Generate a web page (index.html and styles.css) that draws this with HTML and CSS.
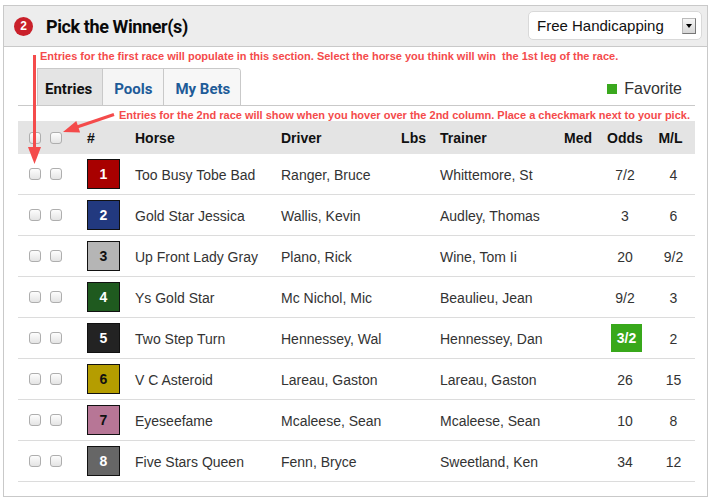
FILE: index.html
```html
<!DOCTYPE html>
<html lang="en">
<head>
<meta charset="utf-8">
<title>Pick the Winner(s)</title>
<link rel="stylesheet" href="styles.css">
</head>
<body>
<div class="panel">
  <div class="panel-head">
    <span class="step">2</span>
    <h2 class="title">Pick the Winner(s)</h2>
    <div class="select">
      <span class="select-label">Free Handicapping</span>
      <span class="select-btn"><svg width="6" height="4" viewBox="0 0 6 4"><polygon points="0,0 6,0 3,4" fill="#000"/></svg></span>
    </div>
  </div>
  <div class="panel-body">
    <p class="note note-1">Entries for the first race will populate in this section. Select the horse you think will win&nbsp; the 1st leg of the race.</p>
    <div class="tabbar">
      <ul class="tabs">
        <li class="tab active">Entries</li>
        <li class="tab">Pools</li>
        <li class="tab last">My Bets</li>
      </ul>
      <div class="legend"><span class="swatch"></span>Favorite</div>
    </div>
    <p class="note note-2">Entries for the 2nd race will show when you hover over the 2nd column. Place a checkmark next to your pick.</p>
    <div class="entries">
      <div class="row head">
        <div class="cbs"><span class="cb"></span><span class="cb"></span></div>
        <div>#</div>
        <div>Horse</div>
        <div>Driver</div>
        <div class="lbs">Lbs</div>
        <div>Trainer</div>
        <div class="med">Med</div>
        <div class="odds">Odds</div>
        <div class="ml">M/L</div>
      </div>
      <div class="row">
        <div class="cbs"><span class="cb"></span><span class="cb"></span></div>
        <div><span class="num n1">1</span></div>
        <div>Too Busy Tobe Bad</div>
        <div>Ranger, Bruce</div>
        <div class="lbs"></div>
        <div>Whittemore, St</div>
        <div class="med"></div>
        <div class="odds">7/2</div>
        <div class="ml">4</div>
      </div>
      <div class="row">
        <div class="cbs"><span class="cb"></span><span class="cb"></span></div>
        <div><span class="num n2">2</span></div>
        <div>Gold Star Jessica</div>
        <div>Wallis, Kevin</div>
        <div class="lbs"></div>
        <div>Audley, Thomas</div>
        <div class="med"></div>
        <div class="odds">3</div>
        <div class="ml">6</div>
      </div>
      <div class="row">
        <div class="cbs"><span class="cb"></span><span class="cb"></span></div>
        <div><span class="num n3">3</span></div>
        <div>Up Front Lady Gray</div>
        <div>Plano, Rick</div>
        <div class="lbs"></div>
        <div>Wine, Tom Ii</div>
        <div class="med"></div>
        <div class="odds">20</div>
        <div class="ml">9/2</div>
      </div>
      <div class="row">
        <div class="cbs"><span class="cb"></span><span class="cb"></span></div>
        <div><span class="num n4">4</span></div>
        <div>Ys Gold Star</div>
        <div>Mc Nichol, Mic</div>
        <div class="lbs"></div>
        <div>Beaulieu, Jean</div>
        <div class="med"></div>
        <div class="odds">9/2</div>
        <div class="ml">3</div>
      </div>
      <div class="row">
        <div class="cbs"><span class="cb"></span><span class="cb"></span></div>
        <div><span class="num n5">5</span></div>
        <div>Two Step Turn</div>
        <div>Hennessey, Wal</div>
        <div class="lbs"></div>
        <div>Hennessey, Dan</div>
        <div class="med"></div>
        <div class="odds"><span class="fav">3/2</span></div>
        <div class="ml">2</div>
      </div>
      <div class="row">
        <div class="cbs"><span class="cb"></span><span class="cb"></span></div>
        <div><span class="num n6">6</span></div>
        <div>V C Asteroid</div>
        <div>Lareau, Gaston</div>
        <div class="lbs"></div>
        <div>Lareau, Gaston</div>
        <div class="med"></div>
        <div class="odds">26</div>
        <div class="ml">15</div>
      </div>
      <div class="row">
        <div class="cbs"><span class="cb"></span><span class="cb"></span></div>
        <div><span class="num n7">7</span></div>
        <div>Eyeseefame</div>
        <div>Mcaleese, Sean</div>
        <div class="lbs"></div>
        <div>Mcaleese, Sean</div>
        <div class="med"></div>
        <div class="odds">10</div>
        <div class="ml">8</div>
      </div>
      <div class="row">
        <div class="cbs"><span class="cb"></span><span class="cb"></span></div>
        <div><span class="num n8">8</span></div>
        <div>Five Stars Queen</div>
        <div>Fenn, Bryce</div>
        <div class="lbs"></div>
        <div>Sweetland, Ken</div>
        <div class="med"></div>
        <div class="odds">34</div>
        <div class="ml">12</div>
      </div>
    </div>
  </div>
</div>
<svg class="annotations" width="713" height="503" viewBox="0 0 713 503">
  <line x1="34.5" y1="55" x2="34.5" y2="150" stroke="#f44b4b" stroke-width="3"/>
  <polygon points="28,147 41,147 34.5,164" fill="#f44b4b"/>
  <line x1="114" y1="114.5" x2="77" y2="127" stroke="#f44b4b" stroke-width="3"/>
  <polygon points="63,132 76.3,121.1 80.1,132.5" fill="#f44b4b"/>
</svg>
</body>
</html>
```
FILE: styles.css
```css
html, body {
  margin: 0;
  padding: 0;
}

body {
  position: relative;
  width: 713px;
  height: 503px;
  overflow: hidden;
  background: #fff;
  color: #333;
  font-family: "Liberation Sans", Arial, sans-serif;
}

.panel {
  margin: 5px 0 0 3px;
  width: 703px;
  height: 490px;
  border: 1px solid #c9c9c9;
}

.panel-head {
  display: flex;
  align-items: center;
  height: 40px;
  padding: 0 5px 0 10px;
  background: #ededed;
  border-bottom: 1px solid #c9c9c9;
}

.step {
  display: flex;
  align-items: center;
  justify-content: center;
  width: 19px;
  height: 19px;
  border-radius: 50%;
  background: #c9202a;
  color: #fff;
  font-size: 12px;
  font-weight: bold;
}

.title {
  margin: 0 0 0 13px;
  font-family: Roboto, "Liberation Sans", sans-serif;
  font-size: 18px;
  font-weight: 700;
  letter-spacing: -0.4px;
  color: #0a0a0a;
}

.select {
  display: flex;
  align-items: center;
  justify-content: space-between;
  box-sizing: border-box;
  width: 174px;
  height: 29px;
  margin: -2px 0 0 auto;
  padding: 0 5px 0 8px;
  background: #fff;
  border: 1px solid #d9d9d9;
  border-radius: 5px;
  font-size: 15px;
  color: #111;
}

.select-btn {
  display: flex;
  align-items: center;
  justify-content: center;
  box-sizing: border-box;
  width: 14px;
  height: 16px;
  margin-top: 1px;
  background: linear-gradient(#f6f6f6, #d6d6d6);
  border: 1px solid #bbb;
  border-right-color: #777;
  border-bottom-color: #777;
}

.panel-body {
  padding: 0 12px 0 14px;
}

.note {
  margin: 0;
  color: #f44b4b;
  font-size: 11px;
  font-weight: bold;
  white-space: nowrap;
}

.note-1 {
  height: 21px;
  line-height: 19px;
  padding-left: 22px;
}

.note-2 {
  height: 15px;
  line-height: 18px;
  padding-left: 101px;
}

.tabbar {
  display: flex;
  height: 37px;
  padding: 0 13px 0 19px;
  border-bottom: 1px solid #c9c9c9;
}

.tabs {
  display: flex;
  margin: 0;
  padding: 0;
  list-style: none;
  border: 1px solid #c9c9c9;
  border-bottom: none;
  border-radius: 0 4px 0 0;
  overflow: hidden;
}

.tab {
  display: flex;
  align-items: center;
  padding: 3px 11px 0;
  background: #f5f5f5;
  color: #1e5b98;
  font-family: Roboto, "Liberation Sans", sans-serif;
  font-size: 15px;
  font-weight: bold;
  border-left: 1px solid #c9c9c9;
}

.tab:first-child {
  border-left: none;
  padding: 3px 10px 0 7px;
}

.tab.active {
  background: #e4e4e4;
  color: #111;
}

.tab.last {
  background: #f7f7f7;
  padding-right: 10px;
}

.legend {
  display: flex;
  align-items: center;
  margin: 4px 0 0 auto;
  font-size: 16px;
  color: #333;
}

.swatch {
  width: 10px;
  height: 10px;
  margin-right: 7px;
  background: #3aa81e;
}

.row {
  display: grid;
  grid-template-columns: 69px 48px 146px 109px 50px 110px 50px 50px 45px;
  align-items: center;
  height: 38px;
  padding-top: 2px;
  border-bottom: 1px solid #dcdcdc;
  font-size: 14px;
  color: #333;
}

.row.head {
  height: 33px;
  padding-top: 0;
  border-bottom: none;
  background: #e4e4e4;
  font-weight: bold;
  color: #111;
}

.cbs {
  display: flex;
  gap: 9px;
  padding-left: 11px;
}

.row .cbs {
  margin-top: -2px;
}

.row.head .cbs {
  margin-top: 0;
}

.cb {
  box-sizing: border-box;
  width: 12px;
  height: 12px;
  border: 1px solid #aeaeae;
  border-radius: 3px;
  background: linear-gradient(#fdfdfd, #e4e4e4);
}

.lbs {
  text-align: right;
  padding-right: 14px;
}

.med {
  text-align: right;
  padding-right: 8px;
}

.odds,
.ml {
  text-align: center;
}

.ml {
  padding-left: 2px;
}

.row.head .ml {
  padding: 0 4px 0 0;
}

.num {
  display: flex;
  align-items: center;
  justify-content: center;
  box-sizing: border-box;
  width: 33px;
  height: 30px;
  margin-top: -2px;
  border: 1px solid #111;
  color: #fff;
  font-weight: bold;
  font-size: 14px;
}

.n1 { background: #a80000; }
.n2 { background: #22397f; }
.n3 { background: #b5b5b5; color: #111; }
.n4 { background: #1f5a1f; }
.n5 { background: #232323; }
.n6 { background: #b59d00; color: #111; }
.n7 { background: #b77696; color: #111; }
.n8 { background: #666; }

.fav {
  display: inline-flex;
  align-items: center;
  justify-content: center;
  width: 31px;
  height: 28px;
  margin: -2px 0 0 3px;
  vertical-align: middle;
  background: #38a81b;
  color: #fff;
  font-weight: bold;
}

.annotations {
  position: absolute;
  top: 0;
  left: 0;
  pointer-events: none;
}
```
